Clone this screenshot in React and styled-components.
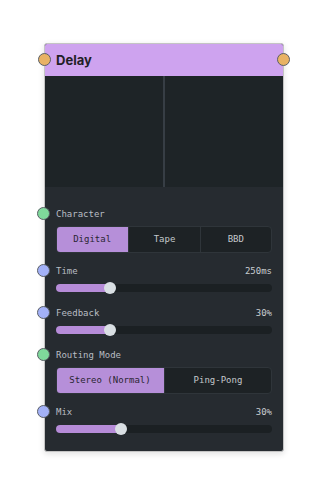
import React from "react";
import styled, { createGlobalStyle } from "styled-components";

const GlobalStyle = createGlobalStyle`
  html, body {
    margin: 0;
    padding: 0;
    background: #ffffff;
  }
  #root {
    min-height: 100vh;
  }
`;

const Page = styled.div`
  min-height: 494px;
  display: flex;
  align-items: center;
  justify-content: center;
`;

const Node = styled.div`
  position: relative;
  width: 240px;
  background: #262b30;
  border: 1px solid #c4c4c4;
  border-radius: 3px;
  box-shadow: 0 2px 6px rgba(0, 0, 0, 0.12);
  box-sizing: border-box;
  display: flex;
  flex-direction: column;
`;

const Header = styled.div`
  position: relative;
  height: 32px;
  background: #cea3ef;
  border-radius: 2px 2px 0 0;
  display: flex;
  align-items: center;
  padding: 0 11px;

  h1 {
    margin: 0;
    font-family: Inter, "Liberation Sans", sans-serif;
    font-weight: 700;
    font-size: 13px;
    color: #1f2026;
  }
`;

const Handle = styled.span`
  position: absolute;
  top: 50%;
  ${(p) => (p.$side === "right" ? "right: -7px;" : "left: -7px;")}
  width: 11px;
  height: 11px;
  margin-top: -7px;
  border-radius: 50%;
  background: ${(p) => p.$color};
  border: 1.5px solid #5a5f66;
`;

const Display = styled.div`
  height: 111px;
  background: #1e2427;
  display: grid;
  grid-template-columns: 1fr 2px 1fr;
`;

const CenterLine = styled.div`
  grid-column: 2;
  background: #373e45;
`;

const Body = styled.div`
  padding: 21px 11px 15px 11px;
  display: flex;
  flex-direction: column;
  gap: 12px;
  font-family: "DejaVu Sans Mono", "Liberation Mono", monospace;
`;

const Field = styled.div`
  display: flex;
  flex-direction: column;
  gap: ${(p) => (p.$slider ? "5px" : "6px")};
`;

const LabelRow = styled.div`
  position: relative;
  height: 12px;
  display: flex;
  align-items: center;
  justify-content: space-between;
  font-size: 9px;
  color: #b9bdc3;

  ${Handle} {
    left: -19px;
  }

  .value {
    color: #c9cdd1;
  }
`;

const Segmented = styled.div`
  display: grid;
  grid-template-columns: repeat(${(p) => p.$count}, 1fr);
  height: 27px;
  border-radius: 4px;
  overflow: hidden;
  background: #1d2225;
  border: 1px solid #2f353a;
  box-sizing: border-box;
`;

const Segment = styled.div`
  display: flex;
  align-items: center;
  justify-content: center;
  font-size: 9px;
  color: ${(p) => (p.$active ? "#2a2532" : "#c4c8cc")};
  background: ${(p) => (p.$active ? "#b68fd9" : "transparent")};
  border-left: ${(p) => (p.$first || p.$active ? "none" : "1px solid #2f353a")};
  margin: ${(p) => (p.$active ? "-1px 0 -1px -1px" : "0")};
`;

const SliderWrap = styled.div`
  position: relative;
  height: 13px;
  display: flex;
  align-items: center;
`;

const Track = styled.div`
  position: relative;
  width: 100%;
  height: 8px;
  border-radius: 4px;
  background: #1b2023;
`;

const Fill = styled.div`
  height: 100%;
  border-radius: 4px;
  background: #b68cd8;
`;

const Thumb = styled.span`
  position: absolute;
  top: 50%;
  width: 12px;
  height: 12px;
  margin: -6px 0 0 -6px;
  border-radius: 50%;
  background: #d9dfe3;
`;

const Label = ({ text, value, color }) => (
  <LabelRow>
    <Handle $color={color} />
    <span>{text}</span>
    {value && <span className="value">{value}</span>}
  </LabelRow>
);

const Choice = ({ label, color, options, active }) => (
  <Field>
    <Label text={label} color={color} />
    <Segmented $count={options.length}>
      {options.map((o, i) => (
        <Segment key={o} $active={o === active} $first={i === 0}>
          {o}
        </Segment>
      ))}
    </Segmented>
  </Field>
);

const Slider = ({ label, value, fraction, color }) => (
  <Field $slider>
    <Label text={label} value={value} color={color} />
    <SliderWrap>
      <Track>
        <Fill style={{ width: `${fraction * 100}%` }} />
        <Thumb style={{ left: `${fraction * 100}%` }} />
      </Track>
    </SliderWrap>
  </Field>
);

const App = () => {
  const green = "#7fd89b";
  const blue = "#a3b1f7";

  return (
    <Page>
      <GlobalStyle />
      <Node>
        <Header>
          <Handle $color="#e8b264" />
          <h1>Delay</h1>
          <Handle $color="#e8b264" $side="right" />
        </Header>
        <Display>
          <CenterLine />
        </Display>
        <Body>
          <Choice
            label="Character"
            color={green}
            options={["Digital", "Tape", "BBD"]}
            active="Digital"
          />
          <Slider label="Time" value="250ms" fraction={0.25} color={blue} />
          <Slider label="Feedback" value="30%" fraction={0.25} color={blue} />
          <Choice
            label="Routing Mode"
            color={green}
            options={["Stereo (Normal)", "Ping-Pong"]}
            active="Stereo (Normal)"
          />
          <Slider label="Mix" value="30%" fraction={0.3} color={blue} />
        </Body>
      </Node>
    </Page>
  );
};

export default App;
